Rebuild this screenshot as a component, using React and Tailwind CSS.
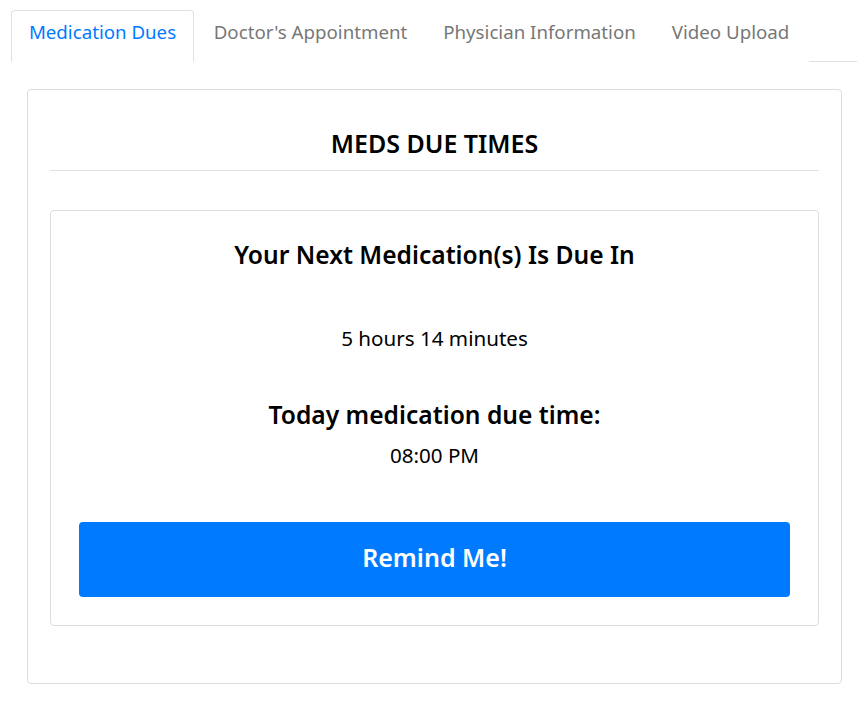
const FONT = "font-['Noto_Sans','Open_Sans',sans-serif]";

const TABS = [
  { label: "Medication Dues", width: "w-[183px]", active: true },
  { label: "Doctor's Appointment", width: "w-[233px]" },
  { label: "Physician Information", width: "w-[225px]" },
  { label: "Video Upload", width: "w-[157px]" },
];

export default function App() {
  return (
    <div className={`${FONT} min-h-[703px] bg-white text-black`}>
      {/* tabs */}
      <div className="flex items-start pl-[11px] pt-[10px]">
        {TABS.map((tab) =>
          tab.active ? (
            <div
              key={tab.label}
              className={`${tab.width} h-[52px] shrink-0 rounded-t-[4px] border border-b-0 border-[#dee2e6] pt-[6px] text-center text-[18.7px] leading-[30px] text-[#007bff]`}
            >
              {tab.label}
            </div>
          ) : (
            <div
              key={tab.label}
              className={`${tab.width} h-[52px] shrink-0 pt-[7px] text-center text-[18.7px] leading-[30px] text-[#777]`}
            >
              {tab.label}
            </div>
          )
        )}
        <div className="h-[52px] flex-1 border-b border-[#dee2e6]" />
      </div>

      {/* card */}
      <div className="ml-[27px] mt-[27px] w-[815px] rounded-[4px] border border-[#dddddd] px-[22px] pt-[37px] pb-[57px]">
        <div className="border-b border-[#dee2e6] pb-[11px] text-center text-[25px] font-semibold leading-[32px]">
          MEDS DUE TIMES
        </div>

        <div className="mt-[39px] flex flex-col items-center rounded-[4px] border border-[#dddddd] p-[28px]">
          <div className="text-[24.6px] font-semibold leading-[32px]">
            Your Next Medication(s) Is Due In
          </div>
          <div className="mt-[53px] text-[20.6px] leading-[28px]">
            5 hours 14 minutes
          </div>
          <div className="mt-[47px] text-[24.6px] font-semibold leading-[32px]">
            Today medication due time:
          </div>
          <div className="mt-[10px] text-[20.6px] leading-[28px]">08:00 PM</div>
          <button className="mt-[53px] h-[75px] w-full rounded-[4px] bg-[#007bff] pb-[6px] text-[25px] font-semibold leading-[32px] text-white">
            Remind Me!
          </button>
        </div>
      </div>
    </div>
  );
}
